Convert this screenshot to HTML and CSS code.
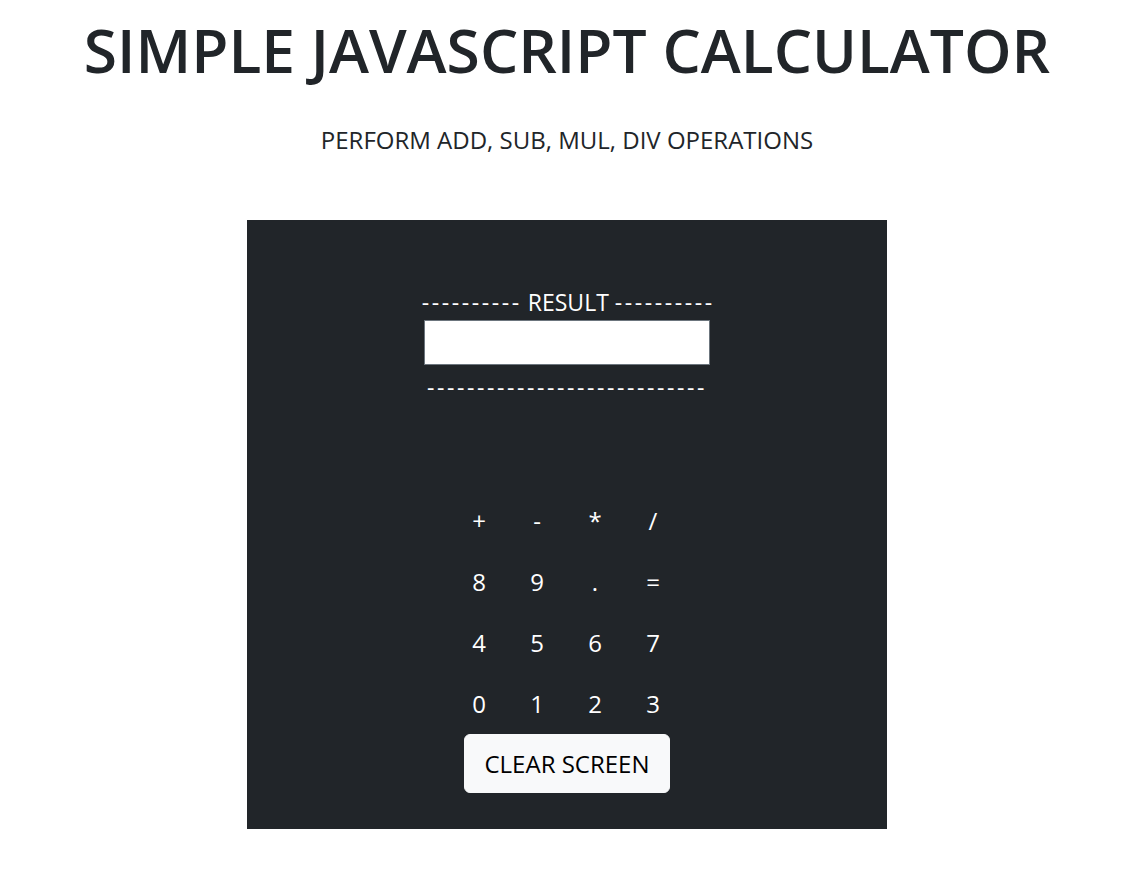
FILE: index.html
```html
<!DOCTYPE html>
<html lang="en">
<head>
<meta charset="utf-8">
<title>Simple JavaScript Calculator</title>
<link rel="stylesheet" href="styles.css">
</head>
<body>
<header class="page-head">
  <h1 class="title">SIMPLE JAVASCRIPT CALCULATOR</h1>
  <p class="lead">PERFORM ADD, SUB, MUL, DIV OPERATIONS</p>
</header>
<main class="calc">
  <div class="result-label"><span class="dashes">----------</span> RESULT <span class="dashes">----------</span></div>
  <input class="result" type="text" aria-label="Result">
  <div class="result-rule"><span class="dashes">----------------------------</span></div>
  <div class="keys">
    <button class="key">+</button>
    <button class="key">-</button>
    <button class="key">*</button>
    <button class="key">/</button>
    <button class="key">8</button>
    <button class="key">9</button>
    <button class="key">.</button>
    <button class="key">=</button>
    <button class="key">4</button>
    <button class="key">5</button>
    <button class="key">6</button>
    <button class="key">7</button>
    <button class="key">0</button>
    <button class="key">1</button>
    <button class="key">2</button>
    <button class="key">3</button>
  </div>
  <button class="clear">CLEAR SCREEN</button>
</main>
</body>
</html>
```
FILE: styles.css
```css
* { box-sizing: border-box; }
body {
  margin: 0;
  padding-left: 5px;
  font-family: "Open Sans", "Noto Sans", sans-serif;
  color: #212529;
  background: #fff;
}
.page-head {
  text-align: center;
  padding-top: 14px;
}
.title {
  margin: 0;
  font-size: 60.5px;
  font-weight: 600;
  line-height: 1.2;
}
.lead {
  margin: 35px 0 0;
  font-size: 24px;
  font-weight: 400;
  line-height: 1.5;
}
.calc {
  width: 640px;
  margin: 62px auto 0;
  background: #212529;
  color: #fff;
  display: flex;
  flex-direction: column;
  align-items: center;
  padding: 64px 0 36px;
}
.result-label, .result-rule {
  font-size: 23px;
  line-height: 36px;
}
.dashes {
  letter-spacing: 2.6px;
}
.result-label .dashes:first-child { margin-left: 2.6px; }
.result {
  width: 286px;
  height: 45px;
  border: 1px solid #6c757d;
  background: #fff;
  margin: 0;
  padding: 0 10px;
  font-size: 20px;
}
.result-rule { margin-top: 4px; }
.keys {
  margin-top: 85px;
  margin-right: 2px;
  display: grid;
  grid-template-columns: repeat(4, 58px);
  grid-auto-rows: 61px;
}
.key {
  background: transparent;
  border: 0;
  color: #fff;
  font-family: inherit;
  font-size: 24px;
  padding: 0;
  cursor: pointer;
}
.clear {
  width: 206px;
  height: 59px;
  background: #f8f9fa;
  color: #000;
  border: 1px solid #f8f9fa;
  border-radius: 6px;
  font-family: inherit;
  font-size: 24px;
  padding: 0;
  cursor: pointer;
}
```
